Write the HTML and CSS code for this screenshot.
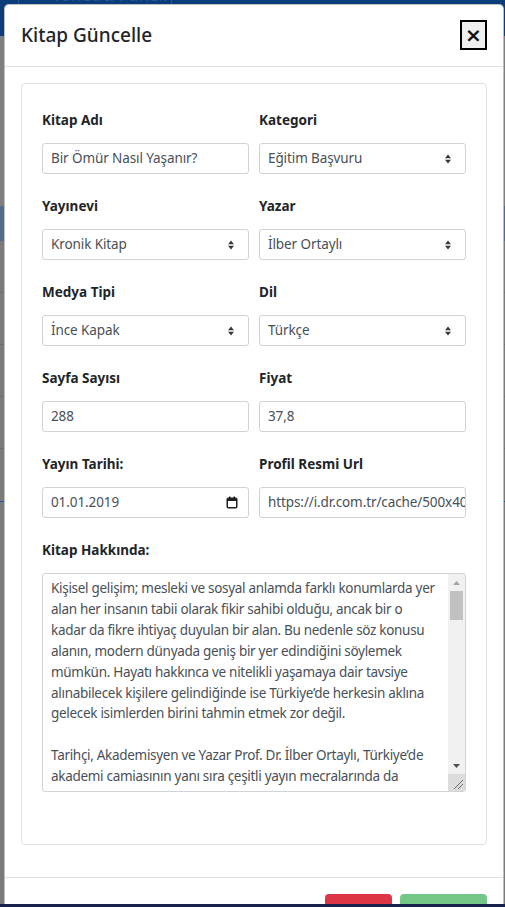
FILE: index.html
```html
<!DOCTYPE html>
<html lang="tr">
<head>
<meta charset="utf-8">
<title>Kitap Güncelle</title>
<link rel="stylesheet" href="styles.css">
</head>
<body>
<div class="page-bg">
  <header class="navbar"><span class="nav-sep"></span><span class="brand">Yönetici Paneli</span><span class="nav-sep2"></span></header>
  <div class="bg-gap-a"></div>
  <div class="bg-band"></div>
  <div class="bg-rows">
    <div class="bg-row"></div>
    <div class="bg-row"></div>
    <div class="bg-row"></div>
    <div class="bg-row"></div>
  </div>
  <div class="bg-blue-line"></div>
</div>

<div class="modal">
  <div class="modal-header">
    <h5 class="modal-title">Kitap Güncelle</h5>
    <button class="close" type="button"><span>×</span></button>
  </div>
  <div class="modal-body">
    <div class="card">
      <div class="card-body">
        <div class="form-grid">
          <div class="field">
            <label class="lbl">Kitap Adı</label>
            <div class="control">Bir Ömür Nasıl Yaşanır?</div>
          </div>
          <div class="field">
            <label class="lbl">Kategori</label>
            <div class="control select"><span>Eğitim Başvuru</span><svg class="sort" width="6" height="10" viewBox="0 0 6 10"><path d="M0 4.2 L3 0.5 L6 4.2 Z M0 5.8 L3 9.5 L6 5.8 Z" fill="#343a40"/></svg></div>
          </div>
          <div class="field">
            <label class="lbl">Yayınevi</label>
            <div class="control select"><span>Kronik Kitap</span><svg class="sort" width="6" height="10" viewBox="0 0 6 10"><path d="M0 4.2 L3 0.5 L6 4.2 Z M0 5.8 L3 9.5 L6 5.8 Z" fill="#343a40"/></svg></div>
          </div>
          <div class="field">
            <label class="lbl">Yazar</label>
            <div class="control select"><span>İlber Ortaylı</span><svg class="sort" width="6" height="10" viewBox="0 0 6 10"><path d="M0 4.2 L3 0.5 L6 4.2 Z M0 5.8 L3 9.5 L6 5.8 Z" fill="#343a40"/></svg></div>
          </div>
          <div class="field">
            <label class="lbl">Medya Tipi</label>
            <div class="control select"><span>İnce Kapak</span><svg class="sort" width="6" height="10" viewBox="0 0 6 10"><path d="M0 4.2 L3 0.5 L6 4.2 Z M0 5.8 L3 9.5 L6 5.8 Z" fill="#343a40"/></svg></div>
          </div>
          <div class="field">
            <label class="lbl">Dil</label>
            <div class="control select"><span>Türkçe</span><svg class="sort" width="6" height="10" viewBox="0 0 6 10"><path d="M0 4.2 L3 0.5 L6 4.2 Z M0 5.8 L3 9.5 L6 5.8 Z" fill="#343a40"/></svg></div>
          </div>
          <div class="field">
            <label class="lbl">Sayfa Sayısı</label>
            <div class="control">288</div>
          </div>
          <div class="field">
            <label class="lbl">Fiyat</label>
            <div class="control">37,8</div>
          </div>
          <div class="field">
            <label class="lbl">Yayın Tarihi:</label>
            <div class="control select date"><span>01.01.2019</span><svg class="cal" width="12" height="13" viewBox="0 0 12 13"><rect x="1.25" y="2.25" width="9.5" height="9.5" rx="1" fill="none" stroke="#1f1f1f" stroke-width="1.5"/><rect x="1" y="2" width="10" height="3" fill="#1f1f1f"/><rect x="3" y="0.5" width="1.5" height="2.5" fill="#1f1f1f"/><rect x="7.5" y="0.5" width="1.5" height="2.5" fill="#1f1f1f"/></svg></div>
          </div>
          <div class="field">
            <label class="lbl">Profil Resmi Url</label>
            <div class="control clip">https://i.dr.com.tr/cache/500x400-0/originals/0001809693001-1.jpg</div>
          </div>
          <div class="field wide">
            <label class="lbl">Kitap Hakkında:</label>
            <div class="textarea">
              <div class="ta-text">Kişisel gelişim; mesleki ve sosyal anlamda farklı konumlarda yer
alan her insanın tabii olarak fikir sahibi olduğu, ancak bir o
kadar da fikre ihtiyaç duyulan bir alan. Bu nedenle söz konusu
alanın, modern dünyada geniş bir yer edindiğini söylemek
mümkün. Hayatı hakkınca ve nitelikli yaşamaya dair tavsiye
alınabilecek kişilere gelindiğinde ise Türkiye’de herkesin aklına
gelecek isimlerden birini tahmin etmek zor değil.

Tarihçi, Akademisyen ve Yazar Prof. Dr. İlber Ortaylı, Türkiye’de
akademi camiasının yanı sıra çeşitli yayın mecralarında da</div>
              <div class="ta-scroll">
                <div class="sb-btn"><svg width="7" height="4" viewBox="0 0 7 4"><path d="M0 4 L3.5 0 L7 4 Z" fill="#a3a3a3"/></svg></div>
                <div class="sb-track"><div class="sb-thumb"></div></div>
                <div class="sb-btn"><svg width="7" height="4" viewBox="0 0 7 4"><path d="M0 0 L3.5 4 L7 0 Z" fill="#505050"/></svg></div>
                <div class="sb-corner"><svg width="17" height="17" viewBox="0 0 17 17"><path d="M6 15 L15 6 M10 15 L15 10" stroke="#6e6e6e" stroke-width="1"/></svg></div>
              </div>
            </div>
          </div>
        </div>
      </div>
    </div>
  </div>
  <div class="modal-footer">
    <button class="btn btn-danger" type="button">Kapat</button>
    <button class="btn btn-success" type="button">Güncelle</button>
  </div>
</div>

<div class="bottom-bar"></div>
</body>
</html>
```

FILE: styles.css
```css
* { box-sizing: border-box; }

html, body {
  margin: 0;
  padding: 0;
}

body {
  height: 907px;
  overflow: hidden;
  position: relative;
  background: #7b7b7b;
  font-family: "Noto Sans", "Open Sans", sans-serif;
  color: #212529;
}

/* page behind the modal (dimmed) */
.page-bg {
  display: flex;
  flex-direction: column;
}

.navbar {
  height: 36px;
  background: #0c3d7b;
  display: flex;
  align-items: flex-start;
  overflow: hidden;
}

.nav-sep {
  width: 1px;
  height: 36px;
  margin-left: 18px;
  background: #2f568c;
}

.brand {
  margin-left: 33px;
  margin-top: -16px;
  font-size: 17px;
  line-height: 22px;
  color: #2d5590;
  white-space: nowrap;
}

.nav-sep2 {
  width: 1px;
  height: 36px;
  margin-left: 4px;
  background: #2f568c;
}

.bg-gap-a {
  height: 170px;
  background: #7f7f7f;
}

.bg-band {
  height: 35px;
  background: #516b8d;
}

.bg-rows {
  display: flex;
  flex-direction: column;
}

.bg-row {
  height: 52px;
  border-bottom: 1px solid #6f6f6f;
}

.bg-blue-line {
  margin-top: 52px;
  height: 1px;
  background: #1f56a6;
}

/* modal */
.modal {
  position: absolute;
  left: 4px;
  top: 4px;
  width: 500px;
  background: #fff;
  border: 1px solid rgba(0, 0, 0, 0.25);
  border-radius: 5px;
}

.modal-header {
  display: flex;
  align-items: flex-start;
  justify-content: space-between;
  padding: 15px 16px 16px 16px;
  border-bottom: 1px solid #dee2e6;
}

.modal-title {
  margin: 0;
  font-size: 19px;
  line-height: 30px;
  font-weight: 500;
  color: #212529;
}

.close {
  width: 27px;
  height: 30px;
  margin-top: 0;
  padding: 0;
  border: 2px solid #000;
  background: #efefef;
  font-family: "DejaVu Sans", sans-serif;
  font-size: 20px;
  line-height: 24px;
  font-weight: 700;
  color: #111;
  display: flex;
  align-items: center;
  justify-content: center;
}

.modal-body {
  padding: 16px 16px 32px 16px;
}

.card {
  border: 1px solid #dfe1e5;
  border-radius: 4px;
}

.card-body {
  padding: 26px 20px 52px 20px;
}

.form-grid {
  display: grid;
  grid-template-columns: 207px 207px;
  column-gap: 10px;
  row-gap: 22px;
}

.field {
  display: flex;
  flex-direction: column;
  min-width: 0;
}

.field.wide {
  grid-column: 1 / 3;
}

.lbl {
  font-size: 13.5px;
  line-height: 21px;
  font-weight: 700;
  color: #212529;
  margin-bottom: 12px;
}

.control {
  height: 31px;
  border: 1px solid #ced4da;
  border-radius: 3px;
  padding: 4px 8px;
  font-size: 13.5px;
  line-height: 21px;
  letter-spacing: -0.1px;
  color: #495057;
  white-space: nowrap;
  overflow: hidden;
}

.control.select {
  display: flex;
  align-items: center;
  justify-content: space-between;
  padding-right: 14px;
}

.control.date {
  padding-right: 10px;
}

.sort {
  width: 6px;
  height: 10px;
  flex: none;
}

.cal {
  flex: none;
}

.control.clip {
  text-overflow: clip;
}

.textarea {
  height: 219px;
  border: 1px solid #ced4da;
  border-radius: 3px;
  display: flex;
  overflow: hidden;
}

.ta-text {
  flex: 1;
  padding: 4px 8px;
  font-size: 13.5px;
  line-height: 20.9px;
  letter-spacing: -0.3px;
  color: #495057;
  white-space: pre;
  overflow: hidden;
}

.ta-scroll {
  width: 17px;
  flex: none;
  display: flex;
  flex-direction: column;
  background: #f1f1f1;
}

.sb-btn {
  height: 17px;
  display: flex;
  align-items: center;
  justify-content: center;
}

.sb-track {
  flex: 1;
  padding: 0 2px;
}

.sb-thumb {
  height: 29px;
  background: #c1c1c1;
}

.sb-corner {
  height: 17px;
  background: #dcdcdc;
}

.sb-corner svg {
  display: block;
}

.modal-footer {
  border-top: 1px solid #dee2e6;
  padding: 16px 16px;
  display: flex;
  justify-content: flex-end;
  gap: 8px;
}

.btn {
  height: 38px;
  border: 1px solid transparent;
  border-radius: 4px;
  font-family: "Noto Sans", sans-serif;
  font-size: 14px;
  color: #fff;
  padding: 0 12px;
}

.btn-danger {
  width: 67px;
  background: #dc3545;
}

.btn-success {
  width: 87px;
  background: #74c687;
}

.bottom-bar {
  position: fixed;
  left: 0;
  right: 0;
  bottom: 0;
  height: 3px;
  background: #17204a;
}
```
